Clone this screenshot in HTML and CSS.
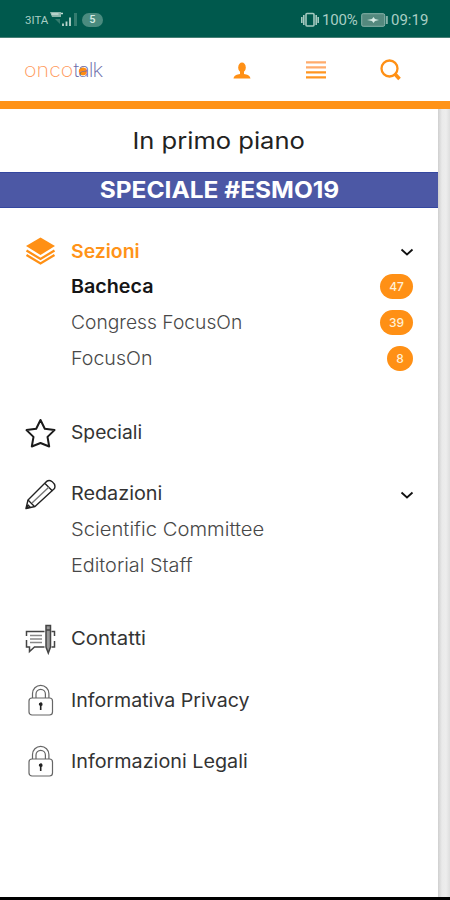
FILE: index.html
```
<!DOCTYPE html>
<html lang="it">
<head>
<meta charset="utf-8">
<title>oncotalk</title>
<link rel="stylesheet" href="styles.css">
</head>
<body>
<div class="status">
  <span class="carrier">3ITA</span>
  <svg class="signal" width="30" height="18" viewBox="0 0 30 18"><path d="M1 3h11v5H3z" fill="#8bb5aa"/><path d="M2.500 5h7M12 4.500h2" stroke="#c7ddd7" stroke-width="1.300"/><path d="M6 10h5v5z" fill="#347c6f"/><path d="M14 17v-2.500M17.500 17v-4.500M21 17V8.500" stroke="#b9d4cd" stroke-width="1.800"/><path d="M26.500 17V4" stroke="#347c6f" stroke-width="3"/></svg>
  <span class="count">5</span>
  <span class="fill"></span>
  <svg class="vibrate" width="18" height="16" viewBox="0 0 18 16" fill="none" stroke="#a5cac0" stroke-width="1.6"><rect x="5" y="1.5" width="8" height="12.5" rx="1"/><path d="M2.800 3v10M15.200 3v10M.8 5v6M17.200 5v6"/></svg>
  <span class="pct">100%</span>
  <svg class="battery" width="28" height="14" viewBox="0 0 28 14"><rect x=".7" y=".7" width="23" height="12.6" rx="1.5" fill="#54897e" stroke="#89b3aa"/><path d="M25.800 3v8" stroke="#89b3aa" stroke-width="2"/><path d="M6 7l5-1 1.500-2 1.500 2 4 1-4 1-1.500 2L11 8z" fill="#d6eae4"/></svg>
  <span class="clock">09:19</span>
</div>
<header class="top">
  <div class="logo"><span class="word"><span class="onco">onco</span><span class="talk">t<span class="a">a</span>lk</span></span></div>
  <svg class="user" width="18" height="18" viewBox="0 0 18 18" fill="#ff9015"><ellipse cx="9" cy="5.500" rx="3.800" ry="5"/><path d="M7 9h4v3c3 .4 6 1.500 6.500 4.500H.5C1 13.500 4 12.400 7 12z"/></svg>
  <svg class="burger" width="20" height="20" viewBox="0 0 20 20" stroke-width="2.200"><path d="M0 2.300h20M0 7.300h20" stroke="#ffac6c"/><path d="M0 12.300h20M0 17.300h20" stroke="#ff9520"/></svg>
  <svg class="search" width="22" height="22" viewBox="0 0 22 22" fill="none" stroke="#ff9015"><circle cx="9.500" cy="9.500" r="8" stroke-width="2.300"/><path d="M14.500 14.500l5 5.500" stroke-width="3.600"/></svg>
</header>
<main class="body">
  <nav class="drawer">
    <h1 class="title"><span>In primo piano</span></h1>
    <div class="band"><span>SPECIALE #ESMO19</span></div>
    <section class="group">
      <div class="row active">
        <svg class="icon" width="32" height="32" viewBox="0 0 32 32"><path d="M15.500 2.500L30 11 15.500 20 1 11z" fill="#ff9015"/><path d="M1.500 15.500l14 8.500 14-8.500M1.500 20l14 8.500 14-8.500" fill="none" stroke="#ff9015" stroke-width="2.300"/></svg>
        <span class="label"><span class="t sezioni">Sezioni</span></span>
        <svg class="chev" width="14" height="10" viewBox="0 0 14 10"><path d="M1.500 2.500L7 7.500l5.500-5" fill="none" stroke="#111" stroke-width="1.800"/></svg>
      </div>
      <div class="sub current"><span class="t bacheca">Bacheca</span><b class="badge">47</b></div>
      <div class="sub"><span class="t congress">Congress FocusOn</span><b class="badge">39</b></div>
      <div class="sub"><span class="t focus">FocusOn</span><b class="badge one">8</b></div>
    </section>
    <section class="group wide">
      <div class="row">
        <svg class="icon" width="32" height="32" viewBox="0 0 32 32"><path d="M15.500 3l4.300 8.800 9.700 1.300-7 6.800 1.700 9.600-8.700-3.500-8.700 3.500 1.700-9.600-7-6.800 9.700-1.300z" fill="none" stroke="#1a1a1a" stroke-width="2" stroke-linejoin="round"/></svg>
        <span class="label"><span class="t speciali">Speciali</span></span>
      </div>
    </section>
    <section class="group">
      <div class="row">
        <svg class="icon" width="32" height="32" viewBox="0 0 32 32" fill="none" stroke="#222" stroke-width="1.400" stroke-linejoin="round"><path d="M1 30.500L3 22 20.500 4.500c4-5 11 1 9 6L10 28.500z"/><path d="M3 22l6.500 6.500M20 5.500l7.500 7.500M1.500 30l1.500-3 2 2z"/><path d="M7 25L24 9" stroke="#777"/></svg>
        <span class="label"><span class="t redazioni">Redazioni</span></span>
        <svg class="chev" width="14" height="10" viewBox="0 0 14 10"><path d="M1.500 2.500L7 7.500l5.500-5" fill="none" stroke="#111" stroke-width="1.800"/></svg>
      </div>
      <div class="sub"><span class="t scientific">Scientific Committee</span></div>
      <div class="sub"><span class="t editorial">Editorial Staff</span></div>
    </section>
    <section class="group wide last">
      <div class="row">
        <svg class="icon" width="32" height="32" viewBox="0 0 32 32" fill="none" stroke="#444" stroke-width="1.500"><path d="M1.500 13V8.500h18M1.500 17v7h3v4.500l5-4.500h10M26.500 8.500h3V13M29.500 18v6h-3"/><path d="M5 12.500h12M5 16h12M5 19.500h12" stroke="#888"/><path d="M21 2.500h4.500V7H21zM21 7h4.500v17l-2.200 6-2.300-6z" fill="#999"/></svg>
        <span class="label"><span class="t contatti">Contatti</span></span>
      </div>
    </section>
    <section class="group low">
      <div class="row">
        <svg class="icon" width="32" height="32" viewBox="0 0 32 32"><g fill="none" stroke="#666" stroke-width="1.200"><rect x="4" y="14" width="23.500" height="17" rx="3"/><path d="M7.500 14V9.500a8.200 8.200 0 0 1 16.400 0V14M11 14v-4a4.700 4.700 0 0 1 9.400 0v4"/></g><path d="M13.800 20.500a1.900 1.900 0 1 1 2.700 1.500V26h-1.600v-4z" fill="#222"/></svg>
        <span class="label"><span class="t privacy">Informativa Privacy</span></span>
      </div>
    </section>
    <section class="group low">
      <div class="row">
        <svg class="icon" width="32" height="32" viewBox="0 0 32 32"><g fill="none" stroke="#666" stroke-width="1.200"><rect x="4" y="14" width="23.500" height="17" rx="3"/><path d="M7.500 14V9.500a8.200 8.200 0 0 1 16.400 0V14M11 14v-4a4.700 4.700 0 0 1 9.400 0v4"/></g><path d="M13.800 20.500a1.900 1.900 0 1 1 2.700 1.500V26h-1.600v-4z" fill="#222"/></svg>
        <span class="label"><span class="t legali">Informazioni Legali</span></span>
      </div>
    </section>
  </nav>
</main>
</body>
</html>
```
FILE: styles.css
```
* { box-sizing: border-box; }
body {
  margin: 0;
  width: 450px;
  height: 900px;
  overflow: hidden;
  display: flex;
  flex-direction: column;
  background: #fff;
  font-family: Inter, "Open Sans", sans-serif;
}
svg { flex: none; display: block; }
.status {
  height: 38px;
  flex: none;
  display: flex;
  align-items: center;
  padding: 2px 22px 0 25px;
  background: #00594d;
  border-bottom: 1px solid #467f75;
  color: #a9cec4;
  font-family: Roboto, sans-serif;
}
.carrier { font-size: 11.5px; width: 24px; white-space: nowrap; }
.signal { margin-top: -3px; }
.count {
  width: 21px;
  height: 14px;
  margin-left: 3px;
  border-radius: 7px;
  background: #4a8b7f;
  color: #d3ebe4;
  font-size: 11px;
  line-height: 14px;
  text-align: center;
  font-weight: 500;
}
.fill { flex: 1; }
.pct { font-size: 15px; width: 36px; margin: 0 3px 0 3px; letter-spacing: -.2px; }
.clock { font-size: 15px; width: 37px; margin-left: 2px; }
.top {
  height: 71px;
  flex: none;
  display: flex;
  align-items: center;
  padding: 1px 48px 0 24px;
  border-bottom: 8px solid #ff9318;
}
.logo { width: 209px; font: 200 19.5px/24px Inter, sans-serif; white-space: nowrap; }
.word { display: inline-block; transform: scaleX(1.09); transform-origin: 0 50%; }
.onco { color: #ff9a5c; letter-spacing: .1px; }
.talk { color: #6a6aa8; letter-spacing: -.9px; }
.a { background: radial-gradient(ellipse at 45% 56%, #ff8c10 0 3.6px, transparent 4.3px); background: radial-gradient(circle at 45% 56%, #ff8c10 0 3.6px, transparent 4.3px); }
.user { margin-top: 1px; }
.burger { margin-left: 55px; }
.search { margin-left: 54px; }
.body {
  flex: 1;
  display: flex;
  background: linear-gradient(90deg, #eaeaea 0 438px, #cfcfcf 438px, #eaeaea 442px, #ededed 446px, #dedede);
  border-bottom: 3px solid #000;
}
.drawer { width: 438px; background: #fff; }
.title {
  margin: 0;
  height: 63px;
  font-size: 23px;
  line-height: 64px;
  font-weight: 400;
  text-align: center;
  color: #222;
}
.title span { display: inline-block; transform: scaleX(1.11); }
.band {
  height: 36px;
  background: #4c58a5;
  border: solid #3447a0;
  border-width: 1px 0;
  color: #fff;
  font-size: 23px;
  line-height: 35px;
  font-weight: 700;
  text-align: center;
  white-space: nowrap;
}
.band span { display: inline-block; transform: scaleX(1.065); }
.group { margin-top: 26px; padding: 0 25px; }
.group.wide { margin-top: 39px; }
.group.last { margin-top: 38px; }
.band + .group { margin-top: 25px; }
.row {
  height: 35px;
  display: flex;
  align-items: center;
  color: #333;
  font-size: 18.5px;
}
.icon { margin-right: 14px; }
.label { flex: 1; white-space: nowrap; margin-top: -1px; }
.active .label, .low .label { margin-top: 1px; }
.active .label { margin-top: 0; }
.chev { margin: 3px -1px 0 0; }
.active { color: #ff9318; font-weight: 600; }
.sub {
  height: 36px;
  padding-left: 46px;
  display: flex;
  align-items: center;
  justify-content: space-between;
  color: #484848;
  font-size: 18.5px;
  font-weight: 300;
  white-space: nowrap;
}
.current { color: #151515; font-weight: 600; }
.t { display: inline-block; transform-origin: 0 50%; }
.sezioni { transform: scaleX(1.05); }
.bacheca { transform: scaleX(1.065); }
.congress { transform: scaleX(1.04); }
.focus { transform: scaleX(1.06); }
.speciali { transform: scaleX(1.04); }
.redazioni { transform: scaleX(1.07); }
.scientific { transform: scaleX(1.092); }
.editorial { transform: scaleX(1.072); }
.contatti { transform: scaleX(1.1); }
.privacy { transform: scaleX(1.06); }
.legali { transform: scaleX(1.068); }
.badge {
  width: 33px;
  height: 25px;
  border-radius: 13px;
  background: #ff9015;
  color: #fff0d8;
  font-size: 12px;
  line-height: 25px;
  font-weight: 500;
  text-align: center;
}
.one { width: 26px; }
```
